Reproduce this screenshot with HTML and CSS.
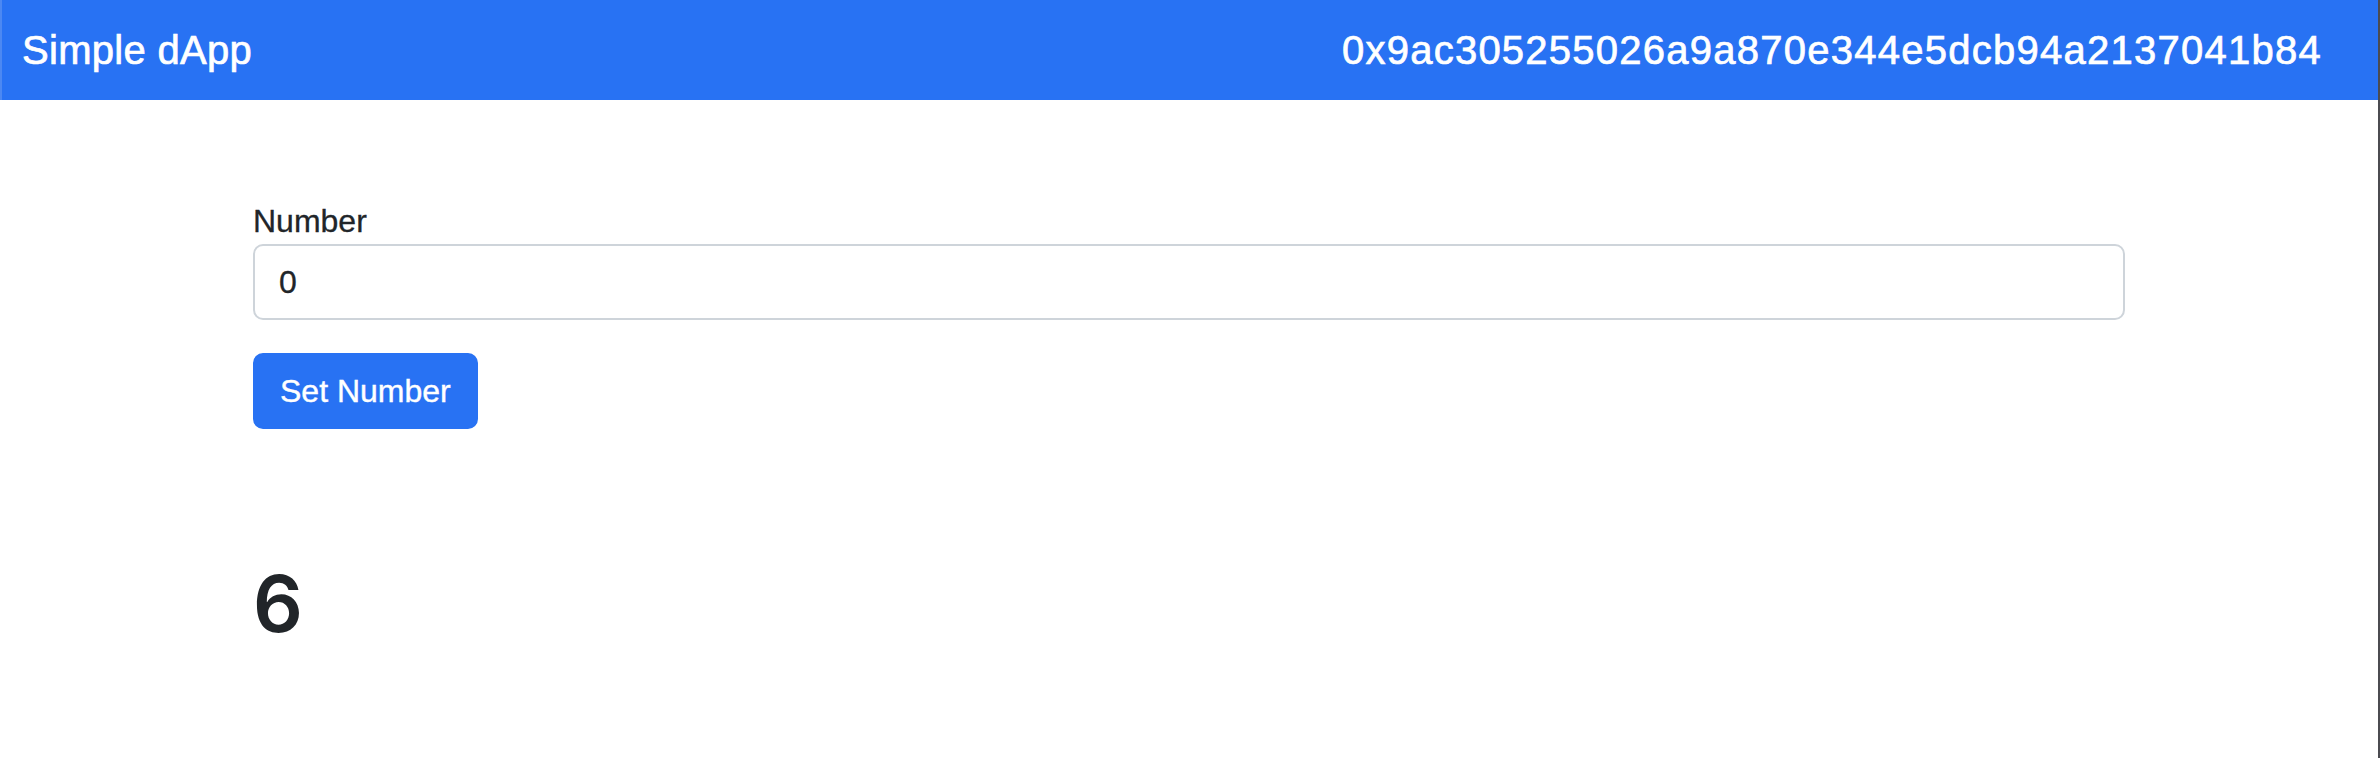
FILE: index.html
```html
<!DOCTYPE html>
<html lang="en">
<head>
<meta charset="utf-8">
<title>Simple dApp</title>
<link rel="stylesheet" href="styles.css">
</head>
<body>
<nav class="navbar">
  <span class="brand">Simple dApp</span>
  <span class="account">0x9ac305255026a9a870e344e5dcb94a2137041b84</span>
</nav>
<main class="container">
  <form class="number-form">
    <div class="form-group">
      <label class="form-label" for="number">Number</label>
      <input class="form-control" id="number" type="text" value="0">
    </div>
    <button class="btn" type="button">Set Number</button>
  </form>
  <h1 class="value">6</h1>
</main>
</body>
</html>
```

FILE: styles.css
```css
* {
  box-sizing: border-box;
}

html, body {
  margin: 0;
  padding: 0;
}

body {
  min-height: 758px;
  background: #ffffff;
  border-right: 2px solid #4b4b50;
  font-family: "Liberation Sans", Arial, sans-serif;
  color: #212529;
}

.navbar {
  display: flex;
  align-items: center;
  justify-content: space-between;
  height: 100px;
  padding: 0 56px 0 20px;
  background: #2872f3;
  border-left: 2px solid #4c88f2;
  color: #ffffff;
}

.brand {
  font-size: 40px;
  line-height: 60px;
  letter-spacing: 0.3px;
  -webkit-text-stroke: 0.7px #ffffff;
}

.account {
  font-size: 40px;
  line-height: 60px;
  letter-spacing: 1.25px;
  -webkit-text-stroke: 0.7px #ffffff;
}

.container {
  width: 1920px;
  margin: 0 auto;
  padding: 97px 24px 0;
}

.form-group {
  display: flex;
  flex-direction: column;
  margin-bottom: 33px;
}

.form-label {
  font-size: 32px;
  line-height: 48px;
  margin-bottom: -1px;
  -webkit-text-stroke: 0.3px #212529;
}

.form-control {
  height: 76px;
  padding: 0 24px;
  border: 2px solid #ced4da;
  border-radius: 10px;
  font-family: inherit;
  font-size: 32px;
  color: #212529;
  background: #ffffff;
  outline: none;
  -webkit-text-stroke: 0.3px #212529;
}

.btn {
  height: 76px;
  padding: 0 25px;
  border: 2px solid #2872f3;
  border-radius: 10px;
  background: #2872f3;
  color: #ffffff;
  font-family: inherit;
  font-size: 32px;
  line-height: 48px;
  -webkit-text-stroke: 0.4px #ffffff;
}

.value {
  margin: 128px 0 0;
  font-family: Inter, "Liberation Sans", sans-serif;
  font-size: 78px;
  line-height: 1.2;
  font-weight: 600;
  color: #212529;
}
```
